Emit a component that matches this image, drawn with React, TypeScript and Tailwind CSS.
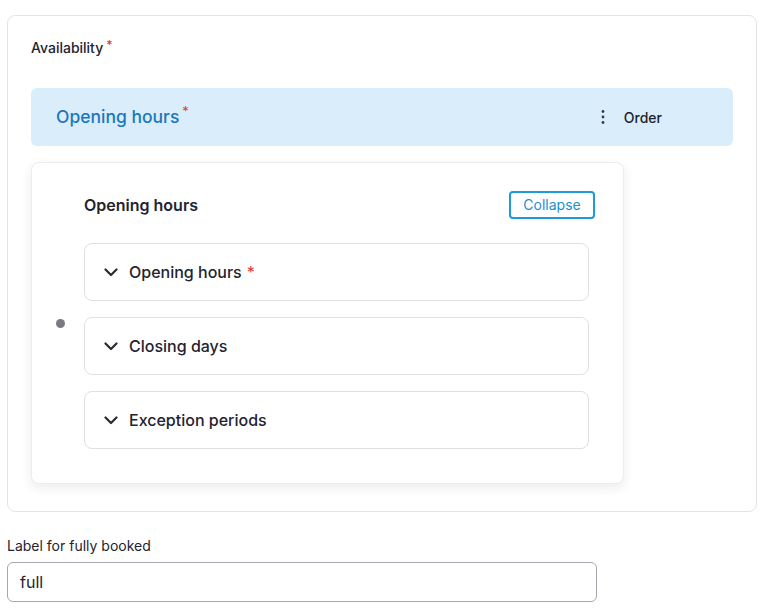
const sections = [
  { label: 'Opening hours', required: true },
  { label: 'Closing days', required: false },
  { label: 'Exception periods', required: false },
]

function Chevron() {
  return (
    <svg width="14" height="9" viewBox="0 0 14 9" fill="none" className="text-[#2a2a36]">
      <polyline points="1.5,1.5 7,7 12.5,1.5" stroke="currentColor" strokeWidth="2.2"
        strokeLinecap="round" strokeLinejoin="round" />
    </svg>
  )
}

export default function App() {
  return (
    <div className="min-h-[615px] bg-white pl-[7px] pr-[17px] pt-[15px] text-[#23232f]"
      style={{ fontFamily: 'Inter, "Noto Sans", sans-serif' }}>
      <div className="rounded-lg border border-[#e4e4e7] px-[23px] pt-[22px] pb-[27px]">
        <div className="text-[14px] leading-5 font-medium h-5 flex items-start">
          <span>Availability</span>
          <span className="ml-[3px] text-[12px] leading-none text-[#e0393e] mt-[1px]">*</span>
        </div>

        <div className="mt-[30px] h-[58px] rounded-md bg-[#d9eefa] pl-[25px] pr-[71px] flex items-center">
          <div className="flex items-start flex-1">
            <span className="text-[17.5px] font-medium text-[#1b76bf] leading-6">Opening hours</span>
            <span className="ml-[3px] text-[13px] leading-none text-[#e0393e]">*</span>
          </div>
          <div className="flex items-center gap-[19px]">
            <svg width="4" height="16" viewBox="0 0 4 16" className="text-[#3a3a46]">
              <circle cx="2" cy="2.5" r="1.4" fill="currentColor" />
              <circle cx="2" cy="8" r="1.4" fill="currentColor" />
              <circle cx="2" cy="13.5" r="1.4" fill="currentColor" />
            </svg>
            <span className="text-[14px] font-medium">Order</span>
          </div>
        </div>

        <div className="mt-[16px] w-[593px] rounded-lg border border-[#ececf0] bg-white shadow-[0_4px_12px_rgba(20,20,40,0.08)] pl-[23px] pr-[28px] pt-[28px] pb-[34px] flex items-center">
          <div className="w-[10px] mt-[6px] flex justify-center">
            <span className="w-[9px] h-[9px] rounded-full bg-[#7a7a80]" />
          </div>
          <div className="ml-[19px] flex-1">
            <div className="flex items-center justify-between h-[27px]">
              <span className="text-[16px] font-semibold">Opening hours</span>
              <button className="h-[28px] w-[86px] rounded-[4px] border-2 border-[#1f9ad8] text-[14px] text-[#1b8fd2]">
                Collapse
              </button>
            </div>
            <div className="mt-[25px] mr-[6px] flex flex-col gap-[16px]">
              {sections.map(s => (
                <div key={s.label}
                  className="h-[58px] rounded-lg border border-[#e0e0e4] pl-[19px] flex items-center">
                  <Chevron />
                  <span className="ml-[11px] text-[16px] font-medium">{s.label}</span>
                  {s.required && <span className="ml-[5px] text-[16px] text-[#e0393e]">*</span>}
                </div>
              ))}
            </div>
          </div>
        </div>
      </div>

      <div className="mt-[24px] text-[14px] leading-5">Label for fully booked</div>
      <div className="mt-[6px] w-[590px] h-[40px] rounded-md border border-[#a6a6b0] pl-[12px] flex items-center text-[16px]">
        full
      </div>
    </div>
  )
}
